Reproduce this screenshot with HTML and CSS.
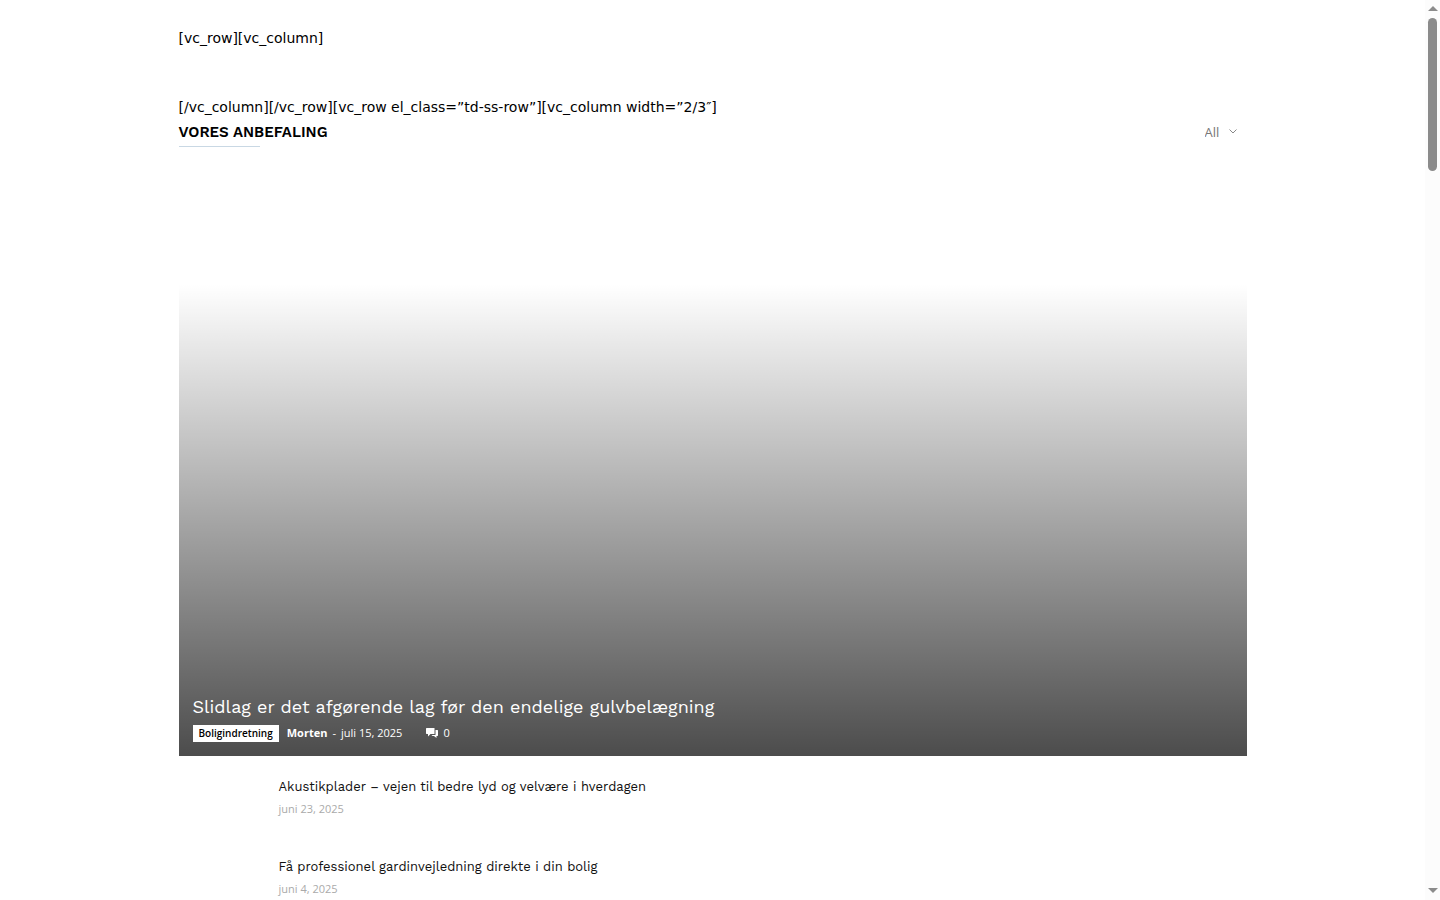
FILE: index.html
```html
<!DOCTYPE html>
<html lang="da">
<head>
    <meta charset="utf-8">
    <title>Vores anbefaling</title>
    <link rel="stylesheet" href="styles.css">
</head>
<body>
    <main class="container">
        <p class="shortcode first">[vc_row][vc_column]</p>
        <p class="shortcode">[/vc_column][/vc_row][vc_row el_class=”td-ss-row”][vc_column width=”2/3″]</p>

        <div class="block-title">
            <h4>VORES ANBEFALING</h4>
            <div class="filter">
                <select aria-label="Filter">
                    <option>All</option>
                </select>
                <svg width="8" height="5" viewBox="0 0 8 5"><path d="M0.5 0.5L4 4L7.5 0.5" fill="none" stroke="#888"/></svg>
            </div>
        </div>

        <article class="featured">
            <h3><a href="#">Slidlag er det afgørende lag før den endelige gulvbelægning</a></h3>
            <div class="meta">
                <a class="category" href="#">Boligindretning</a>
                <a class="author" href="#">Morten</a>
                <span class="dash">-</span>
                <time>juli 15, 2025</time>
                <a class="comments" href="#">
                    <svg width="12" height="10" viewBox="0 0 12 10" fill="#fff"><path d="M.5 0H8.500V6H4.500L2 8.500V6H.5L0 5.500V.5z"/><path d="M9.500 2H11.500L12 2.500V7.500L11.500 8H10.500V10L8 8H5.500L6.500 7H9.500z"/></svg>
                    0
                </a>
            </div>
        </article>

        <article class="item">
            <h3><a href="#">Akustikplader – vejen til bedre lyd og velvære i hverdagen</a></h3>
            <time>juni 23, 2025</time>
        </article>
        <article class="item">
            <h3><a href="#">Få professionel gardinvejledning direkte i din bolig</a></h3>
            <time>juni 4, 2025</time>
        </article>
    </main>

    <div class="scrollbar" aria-hidden="true">
        <svg width="10" height="5" viewBox="0 0 10 5"><path d="M5 0L10 5H0z" fill="#8b8b8b"/></svg>
        <div class="thumb"></div>
        <svg width="10" height="5" viewBox="0 0 10 5" class="down"><path d="M0 0H10L5 5z" fill="#8b8b8b"/></svg>
    </div>
</body>
</html>
```
FILE: styles.css
```css
* {
    box-sizing: border-box;
}

body {
    margin: 0;
    padding-right: 15px;
    background-color: #fff;
    color: #000;
    font-family: "Open Sans", sans-serif;
    font-size: 14px;
    line-height: 21px;
}

a {
    color: inherit;
    text-decoration: none;
}

h3, h4, p {
    margin: 0;
}

h3, h4 {
    font-family: "Work Sans", Inter, sans-serif;
}

.container {
    max-width: 1068px;
    margin: 0 auto;
    padding-top: 28px;
}

.shortcode {
    font-family: "DejaVu Sans", sans-serif;
}

.first {
    margin-bottom: 48px;
}

.block-title {
    display: flex;
    justify-content: space-between;
    align-items: center;
    height: 29px;
    padding-bottom: 2px;
    position: relative;
}

.block-title:after {
    content: "";
    position: absolute;
    left: 0;
    bottom: 0;
    width: 81px;
    height: 1px;
    background-color: #c9d8e4;
}

.block-title h4 {
    font-size: 15px;
    font-weight: 600;
    line-height: 20px;
}

.filter {
    display: flex;
    align-items: center;
    gap: 9px;
    padding-right: 10px;
}

.filter select {
    appearance: none;
    border: 0;
    padding: 0;
    background: none;
    color: #777;
    font-family: "Open Sans", sans-serif;
    font-size: 13px;
}

.featured {
    display: flex;
    flex-direction: column;
    justify-content: flex-end;
    height: 472px;
    margin-top: 137px;
    padding: 14px;
    background: linear-gradient(to bottom, rgba(0, 0, 0, 0), rgba(0, 0, 0, 0.7));
    color: #fff;
}

.featured h3 {
    margin-bottom: 6px;
    font-size: 18px;
    font-weight: 400;
    line-height: 24px;
}

.meta {
    display: flex;
    align-items: flex-start;
    font-size: 11px;
    line-height: 16px;
}

.category {
    margin-right: 8px;
    padding: 0 6px;
    background-color: #fff;
    color: #000;
    font-size: 10px;
    font-weight: 600;
    line-height: 17px;
}

.author {
    font-weight: 700;
}

.dash {
    margin: 0 5px;
}

.comments {
    display: flex;
    align-items: center;
    gap: 5px;
    margin-left: 24px;
}

.item {
    height: 80px;
    padding: 20px 0 0 100px;
}

.item h3 {
    font-size: 13px;
    font-weight: 400;
    line-height: 22px;
    color: #111;
}

.item time {
    display: block;
    margin-top: 1px;
    color: #aaa;
    font-size: 11px;
    line-height: 20px;
}

.scrollbar {
    position: fixed;
    top: 0;
    right: 0;
    bottom: 0;
    width: 15px;
    padding: 6px 0 7px;
    display: flex;
    flex-direction: column;
    align-items: center;
    background-color: #fcfcfc;
}

.thumb {
    width: 9px;
    height: 153px;
    margin-top: 7px;
    border-radius: 5px;
    background-color: #8b8b8b;
}

.down {
    margin-top: auto;
}
```
